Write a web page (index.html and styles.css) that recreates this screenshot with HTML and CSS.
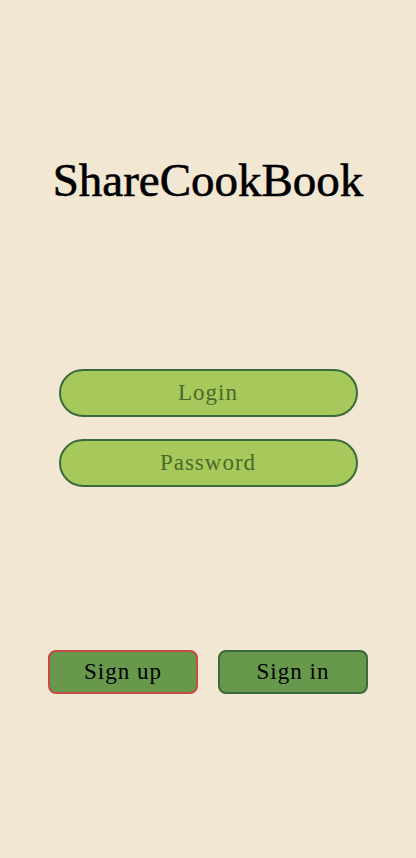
FILE: index.html
```html
<!DOCTYPE html>
<html>
<head>
<meta charset="utf-8">
<link rel="stylesheet" href="styles.css">
</head>
<body>
<div class="screen">
  <h1 class="title">ShareCookBook</h1>
  <form class="form">
    <input class="field" type="text" placeholder="Login">
    <input class="field" type="password" placeholder="Password">
  </form>
  <div class="actions">
    <button class="btn btn-up" type="button">Sign up</button>
    <button class="btn btn-in" type="button">Sign in</button>
  </div>
</div>
</body>
</html>
```
FILE: styles.css
```css
html, body {
  margin: 0;
  padding: 0;
}
body {
  background: #f2e7d2;
  font-family: "Liberation Serif", "DejaVu Serif", serif;
}
.screen {
  width: 416px;
  height: 858px;
  display: flex;
  flex-direction: column;
  align-items: center;
}
.title {
  margin: 150px 0 0 0;
  font-size: 47px;
  line-height: 60px;
  font-weight: 400;
  color: #000;
  -webkit-text-stroke: 0.6px #000;
}
.form {
  margin-top: 159px;
  display: flex;
  flex-direction: column;
  gap: 22px;
}
.field {
  box-sizing: border-box;
  width: 299px;
  height: 48px;
  border: 2px solid #3b6a3d;
  border-radius: 24px;
  background: #a7c85a;
  text-align: center;
  font-family: inherit;
  font-size: 23px;
  color: #4d6b2c;
  outline: none;
  padding: 0;
  margin: 0;
}
.field::placeholder {
  color: #4a6a2a;
  letter-spacing: 1px;
}
.actions {
  margin-top: 163px;
  display: flex;
  gap: 20px;
}
.btn {
  box-sizing: border-box;
  width: 150px;
  height: 44px;
  border-radius: 8px;
  background: #67984c;
  font-family: inherit;
  font-size: 23px;
  color: #000;
  letter-spacing: 1px;
  padding: 0;
  cursor: pointer;
}
.btn-up {
  border: 2px solid #c44a46;
}
.btn-in {
  border: 2px solid #3b6a3d;
}
```
